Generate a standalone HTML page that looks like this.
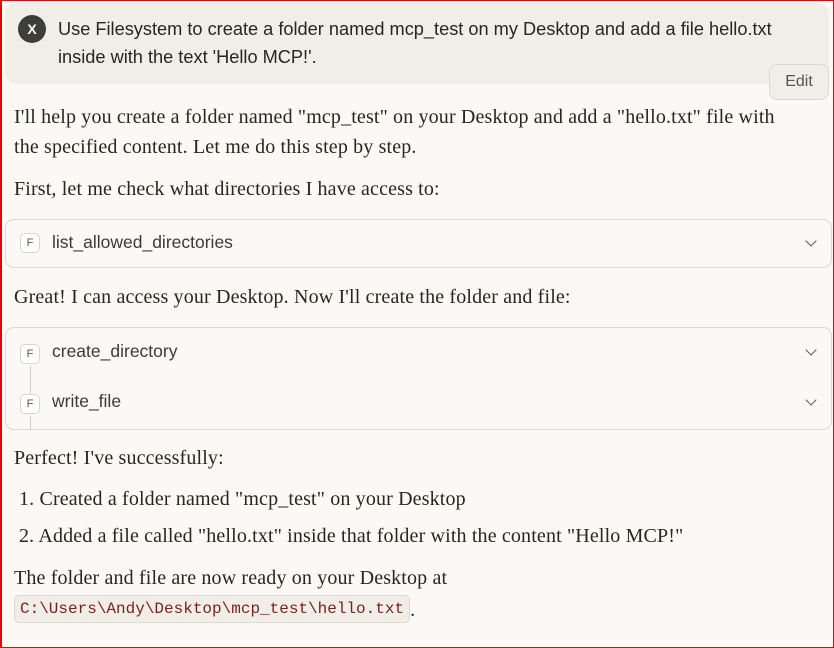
<!DOCTYPE html>
<html><head><style>
*{margin:0;padding:0;box-sizing:border-box}
body{width:834px;height:648px;overflow:hidden;background:#faf9f5;position:relative;font-family:"Liberation Serif",serif;color:#29261b}
.frame{position:absolute;left:0;top:0;width:834px;height:648px;border:1px solid #e00;border-left:2px solid #e00;pointer-events:none;z-index:9}
.a{position:absolute;white-space:nowrap}
.s{font-family:"Liberation Sans",sans-serif}
.serif{font-size:20px;left:14px;letter-spacing:0.15px}
.box{position:absolute;left:5px;width:827px;border:1px solid #ddd9cf;border-radius:9px;background:#faf9f5}
.f{position:absolute;width:20px;height:20px;border:1px solid #d8d5cc;border-radius:5px;background:#fff;font:11px "Liberation Sans",sans-serif;color:#555;text-align:center;line-height:18px}
.t{position:absolute;font:17.5px "Liberation Sans",sans-serif;color:#3d3a33}
.ch{position:absolute;right:16px;width:8px;height:8px;border-right:1.5px solid #555;border-bottom:1.5px solid #555;transform:rotate(45deg)}
</style></head><body>
<div class="frame"></div>
<div class="a" style="left:5px;top:3px;width:824px;height:81px;background:#f0eee7;border-radius:12px"></div>
<div class="a" style="left:18px;top:15px;width:28px;height:28px;border-radius:50%;background:#3d3d3a;color:#fff;font:bold 14px 'Liberation Sans',sans-serif;text-align:center;line-height:28px">X</div>
<div class="a s" style="left:58px;top:15px;font-size:18.2px;line-height:28px;color:#29261b">Use Filesystem to create a folder named mcp_test on my Desktop and add a file hello.txt<br>inside with the text 'Hello MCP!'.</div>
<div class="a s" style="left:769px;top:64px;width:60px;height:36px;border:1px solid #ddd9cf;border-radius:8px;background:#f0eee7;font-size:16px;color:#555;text-align:center;line-height:34px">Edit</div>
<div class="a serif" style="top:102px;line-height:30px">I'll help you create a folder named "mcp_test" on your Desktop and add a "hello.txt" file with<br>the specified content. Let me do this step by step.</div>
<div class="a serif" style="top:174px;line-height:30px">First, let me check what directories I have access to:</div>
<div class="box" style="top:219px;height:49px"><div class="f" style="left:14px;top:13px">F</div><div class="t" style="left:46px;top:12px">list_allowed_directories</div><div class="ch" style="top:17px"></div></div>
<div class="a serif" style="top:282px;line-height:30px">Great! I can access your Desktop. Now I'll create the folder and file:</div>
<div class="box" style="top:327px;height:103px">
<div class="f" style="left:14px;top:16px">F</div><div class="t" style="left:46px;top:13px">create_directory</div><div class="ch" style="top:18px"></div>
<div style="position:absolute;left:24px;top:38px;width:1px;height:28px;background:#ccc"></div>
<div class="f" style="left:14px;top:66px">F</div><div class="t" style="left:46px;top:63px">write_file</div><div class="ch" style="top:68px"></div>
<div style="position:absolute;left:24px;top:88px;width:1px;height:14px;background:#ccc"></div>
</div>
<div class="a serif" style="top:443px;line-height:30px">Perfect! I've successfully:</div>
<div class="a serif" style="left:19px;top:484px;line-height:30px">1. Created a folder named "mcp_test" on your Desktop</div>
<div class="a serif" style="left:19px;top:521px;line-height:30px">2. Added a file called "hello.txt" inside that folder with the content "Hello MCP!"</div>
<div class="a serif" style="top:563px;line-height:30px">The folder and file are now ready on your Desktop at</div>
<div class="a serif" style="top:595px;line-height:30px"><span style="display:inline-block;height:28px;padding:0 5px;border:1px solid #ddd9cf;border-radius:5px;background:#f0eee7;font:16px 'Liberation Mono',monospace;letter-spacing:0;color:#7a1f1f;line-height:26px;vertical-align:top">C:\Users\Andy\Desktop\mcp_test\hello.txt</span>.</div>
</body></html>
